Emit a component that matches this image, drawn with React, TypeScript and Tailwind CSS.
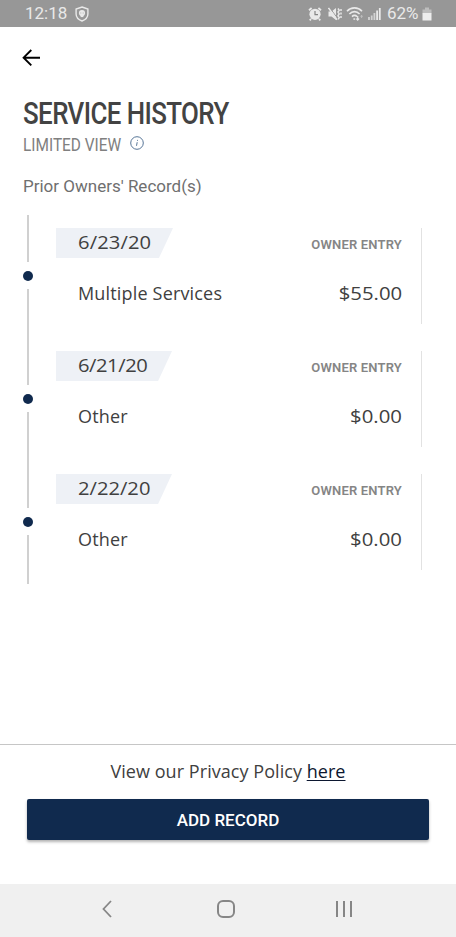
import React from "react";

const records = [
  { date: "6/23/20", title: "Multiple Services", price: "$55.00", tag: "w-[117px]", tracking: "tracking-[0.1px]" },
  { date: "6/21/20", title: "Other", price: "$0.00", tag: "w-[116px]", tracking: "tracking-[-0.4px]" },
  { date: "2/22/20", title: "Other", price: "$0.00", tag: "w-[116px]", tracking: "tracking-[0px]" },
];

function StatusBar() {
  return (
    <div className="flex h-[27px] shrink-0 items-center bg-[#979797] pl-[25px] pr-[23px] text-[17px] leading-[27px] text-[#e9e9e9]">
      <span className="w-[50px]">12:18</span>
      <svg width="14" height="16" viewBox="0 0 14 16" fill="none" stroke="#e9e9e9">
        <path d="M7 1 L12.9 3 V8 C12.9 11.5 10.5 13.7 7 15 C3.5 13.7 1.1 11.5 1.1 8 V3 Z" strokeWidth="1.4" />
        <circle cx="7" cy="7" r="3.1" fill="#e9e9e9" stroke="none" />
        <path d="M5.6 10.3h2.8" strokeWidth="1.6" />
        <path d="M5.3 7h1M7.7 7h1" stroke="#b5b5b5" />
      </svg>
      <div className="ml-auto flex items-center">
        <svg width="14" height="14" viewBox="0 0 14 14">
          <path d="M1 3.2L3.6 1M13 3.2L10.4 1M3 12l-1.3 1.3M11 12l1.3 1.3" stroke="#e9e9e9" strokeWidth="1.8" />
          <circle cx="7" cy="7.3" r="5.6" fill="#e9e9e9" />
          <path d="M7 4v3.7h3" fill="none" stroke="#858585" strokeWidth="1.2" />
        </svg>
        <svg className="ml-[6px]" width="14" height="14" viewBox="0 0 14 14">
          <path d="M0.500 4.500h3L8 1v12L3.500 9.500h-3Z" fill="#e9e9e9" />
          <path d="M1.800 0.800L10 12" stroke="#979797" strokeWidth="1" />
          <path d="M0.500 1L9 12.800" stroke="#e9e9e9" strokeWidth="1.500" />
          <path d="M10 1.500l1.200 1.800-1.200 1.800 1.200 1.800-1.200 1.800 1.200 1.800-1 1.800" fill="none" stroke="#e9e9e9" strokeWidth="1.500" />
          <path d="M13 2v10" stroke="#e9e9e9" strokeWidth="1.500" strokeDasharray="2 1.500" />
        </svg>
        <svg className="ml-[4px]" width="18" height="16" viewBox="0 0 18 16" fill="none" stroke="#e9e9e9" strokeWidth="1.6">
          <path d="M1 5.2C5 0.8 12 0.8 16 5.2M3.4 8C6.4 4.8 10.6 4.8 13.6 8M6 10.6c1.6-1.6 3.4-1.6 5 0" />
          <path d="M8.300 12.300v1.500" strokeWidth="1.800" />
          <path d="M11.700 10v4M10.300 12.600l1.400 1.500 1.400-1.500" strokeWidth="1.200" />
          <path d="M15.600 9v3M14.400 10.300h2.400" stroke="#bdbdbd" strokeWidth="1" />
        </svg>
        <svg className="ml-[4px]" width="13" height="14" viewBox="0 0 13 14" stroke="#e9e9e9" strokeWidth="1.8">
          <path d="M1 10v3M3.700 8.500v4.500M6.400 6v7" stroke="#d2d2d2" />
          <path d="M9.100 3.500v9.500M11.800 1v12" />
        </svg>
        <span className="ml-[6px] w-[32px]">62%</span>
        <svg className="ml-[3px] mr-[1px]" width="10" height="14" viewBox="0 0 10 14">
          <path d="M3 0.500h4v2h2.500v4h-9v-4H3Z" fill="#bdbdbd" />
          <path d="M0.500 6h9v7.500h-9Z" fill="#ededed" />
        </svg>
      </div>
    </div>
  );
}

function Timeline() {
  return (
    <div className="flex w-[10px] flex-col items-center">
      <div className="h-[47px] w-[1.500px] bg-[#d0d0d0]" />
      <div className="my-auto size-[10px] rounded-full bg-[#102a4e]" />
      <div className="h-[49px] w-[1.500px] bg-[#d0d0d0]" />
    </div>
  );
}

export default function App() {
  return (
    <div className="flex h-[937px] w-[456px] flex-col overflow-hidden bg-white font-['Roboto',sans-serif]">
      <StatusBar />
      <header className="h-[188px] shrink-0 pl-[22px] pt-[22px]">
        <svg width="18" height="18" viewBox="0 0 18 18" fill="none" stroke="#000" strokeWidth="1.900">
          <path d="M18 8.700H1.300M9.300 1L1.600 8.700l7.700 7.700" />
        </svg>
        <h1 className="ml-[1px] mt-[27px] h-[40px] w-max origin-left scale-x-[0.835] whitespace-nowrap text-[31px] font-medium leading-[40px] tracking-[-0.7px] text-[#434343]">
          SERVICE HISTORY
        </h1>
        <div className="ml-[1px] flex h-[22px] items-center">
          <span className="w-[107px] origin-left scale-x-[0.88] whitespace-nowrap text-[17.500px] leading-[22px] text-[#808080]">LIMITED VIEW</span>
          <svg className="-mt-[4px]" width="14" height="14" viewBox="0 0 14 14" fill="none" stroke="#45678c">
            <circle cx="7" cy="7" r="6.300" strokeWidth="0.900" />
            <path d="M7.200 6.200L6.500 9.800M7.500 3.900v0.900" strokeWidth="0.900" />
          </svg>
        </div>
        <p className="ml-[1px] mt-[18px] text-[17px] leading-[24px] text-[#6f6f6f]">Prior Owners' Record(s)</p>
      </header>

      <main className="grow pl-[23px]">
        {records.map((r) => (
          <div key={r.date} className="flex h-[123px]">
            <Timeline />
            <div className="ml-[23px] mt-[13px] flex h-[96px] w-[366px] flex-col border-r border-[#e2e2e2] font-['Open_Sans',sans-serif] text-[#404040]">
              <div className="flex h-[30px] items-center justify-between pr-[19px]">
                <div className={`h-[30px] bg-[#eef1f6] pl-[22px] text-[18px] leading-[29px] [clip-path:polygon(0_0,100%_0,88%_100%,0_100%)] ${r.tag} ${r.tracking}`}>
                  <span className="inline-block origin-left scale-x-[1.12]">{r.date}</span>
                </div>
                <span className="pt-[3px] font-['Roboto',sans-serif] text-[13px] font-semibold tracking-[0.18px] text-[#858585]">OWNER ENTRY</span>
              </div>
              <div className="mt-[23px] flex justify-between pl-[22px] pr-[19px] text-[18px] leading-[24px]">
                <span className="tracking-[0.17px]">{r.title}</span>
                <span className="origin-right scale-x-[1.13]">{r.price}</span>
              </div>
            </div>
          </div>
        ))}
      </main>

      <footer className="h-[140px] shrink-0 border-t border-[#c6c6c6] px-[27px] pt-[14px]">
        <p className="text-center font-['Open_Sans',sans-serif] text-[18px] leading-[24px] tracking-[0.05px] text-[#404040]">
          View our Privacy Policy <a className="text-[#0c1730] underline decoration-1 underline-offset-2">here</a>
        </p>
        <button className="mt-[16px] h-[41px] w-full rounded-[2px] bg-[#102a4e] pt-[2px] text-[17px] font-medium text-white shadow-[0_2px_3px_rgba(0,0,0,0.3)]">
          ADD RECORD
        </button>
      </footer>

      <nav className="flex h-[53px] shrink-0 items-center bg-[#f0f0f0] pb-[3px] pl-[102px]">
        <svg width="10" height="18" viewBox="0 0 10 18" fill="none" stroke="#868686" strokeWidth="1.800">
          <path d="M9 1L1.500 9L9 17" />
        </svg>
        <div className="ml-[105px] size-[18px] rounded-[6px] border-2 border-[#868686]" />
        <div className="ml-[101px] flex h-[16px] gap-[5px]">
          <div className="w-[2px] bg-[#868686]" />
          <div className="w-[2px] bg-[#868686]" />
          <div className="w-[2px] bg-[#868686]" />
        </div>
      </nav>
    </div>
  );
}
